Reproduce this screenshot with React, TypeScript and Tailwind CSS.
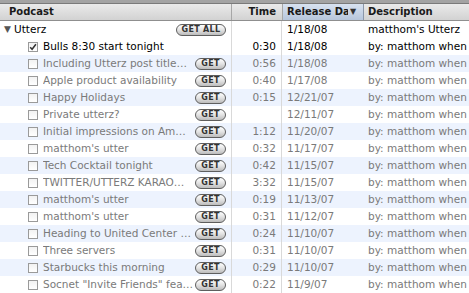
import React from "react";

type Row = { title: string; time: string; date: string; checked?: boolean };

const rows: Row[] = [
  { title: "Bulls 8:30 start tonight", time: "0:30", date: "1/18/08", checked: true },
  { title: "Including Utterz post title…", time: "0:56", date: "1/18/08" },
  { title: "Apple product availability", time: "0:40", date: "1/17/08" },
  { title: "Happy Holidays", time: "0:15", date: "12/21/07" },
  { title: "Private utterz?", time: "", date: "12/11/07" },
  { title: "Initial impressions on Am…", time: "1:12", date: "11/20/07" },
  { title: "matthom's utter", time: "0:32", date: "11/17/07" },
  { title: "Tech Cocktail tonight", time: "0:42", date: "11/15/07" },
  { title: "TWITTER/UTTERZ KARAO…", time: "3:32", date: "11/15/07" },
  { title: "matthom's utter", time: "0:19", date: "11/13/07" },
  { title: "matthom's utter", time: "0:31", date: "11/12/07" },
  { title: "Heading to United Center …", time: "0:24", date: "11/10/07" },
  { title: "Three servers", time: "0:31", date: "11/10/07" },
  { title: "Starbucks this morning", time: "0:29", date: "11/10/07" },
  { title: "Socnet \"Invite Friends\" fea…", time: "0:22", date: "11/9/07" },
];

function Pill({ label, wide }: { label: string; wide?: boolean }) {
  return (
    <span
      className={`flex h-[12px] items-center justify-center rounded-full border border-[#5e5e5e] bg-gradient-to-b from-[#ffffff] via-[#e2e2e2] to-[#bcbcbc] text-[8px] font-bold leading-none tracking-[0.3px] text-[#333] ${
        wide ? "w-[50px]" : "w-[31px]"
      }`}
    >
      {label}
    </span>
  );
}

function Check({ checked }: { checked?: boolean }) {
  return (
    <span className="flex h-[10px] w-[10px] items-center justify-center border border-[#9a9a9a] bg-gradient-to-b from-[#f2f2f2] to-[#ffffff]">
      {checked && (
        <svg width="8" height="8" viewBox="0 0 8 8">
          <path d="M1.2 4.2 L3.1 6.3 L6.9 1.2" fill="none" stroke="#333" strokeWidth="1.5" />
        </svg>
      )}
    </span>
  );
}

export default function App() {
  return (
    <div
      className="h-[293px] w-[469px] overflow-hidden bg-white"
      style={{ fontFamily: '"DejaVu Sans", "Noto Sans", sans-serif' }}
    >
      <div className="h-[4px] border-b border-[#7a7a7a] bg-[#a3a3a3]" />
      <div className="grid h-[17px] grid-cols-[232px_51px_81px_1fr] border-b border-[#8f8f8f] bg-gradient-to-b from-[#eaeaea] to-[#d2d2d2] text-[10px] font-bold leading-[16px] text-[#1a1a1a]">
        <div className="border-r border-[#a7a7a7] pl-[9px]">Podcast</div>
        <div className="border-r border-[#a7a7a7] pr-[6px] text-right">Time</div>
        <div className="flex items-center border-r border-[#8b97aa] bg-gradient-to-b from-[#d8e2f0] to-[#b7c6dc] pl-[4px]">
          <span className="w-[61px] shrink-0 overflow-hidden whitespace-nowrap">Release Date</span>
          <span className="ml-[2px] text-[8px] text-[#333]">▼</span>
        </div>
        <div className="pl-[4px]">Description</div>
      </div>
      <div className="text-[10.5px] leading-[17px]">
        <div className="grid h-[17px] grid-cols-[232px_50px_82px_1fr] bg-white text-black">
          <div className="flex items-center border-r border-[#d9d9d9] pr-[5px]">
            <span className="ml-[4px] w-[10px] text-[9px] text-[#555]">▼</span>
            <span className="flex-1">Utterz</span>
            <Pill label="GET ALL" wide />
          </div>
          <div className="border-r border-[#d9d9d9]" />
          <div className="pl-[5px]">1/18/08</div>
          <div className="whitespace-nowrap pl-[4px]">matthom's Utterz</div>
        </div>
        {rows.map((r, i) => (
          <div
            key={i}
            className={`grid h-[17px] grid-cols-[232px_50px_82px_1fr] ${
              i % 2 === 1 ? "bg-[#edf3fe]" : "bg-white"
            } ${r.checked ? "text-black" : "text-[#7a7a7a]"}`}
          >
            <div className="flex items-center border-r border-[#d9d9d9] pr-[5px]">
              <span className="ml-[28px] mr-[5px]">
                <Check checked={r.checked} />
              </span>
              <span className="flex-1 overflow-hidden whitespace-nowrap">{r.title}</span>
              {!r.checked && <Pill label="GET" />}
            </div>
            <div className="border-r border-[#d9d9d9] pr-[5px] text-right">{r.time}</div>
            <div className="pl-[5px]">{r.date}</div>
            <div className="whitespace-nowrap pl-[4px]">by: matthom when</div>
          </div>
        ))}
      </div>
    </div>
  );
}
